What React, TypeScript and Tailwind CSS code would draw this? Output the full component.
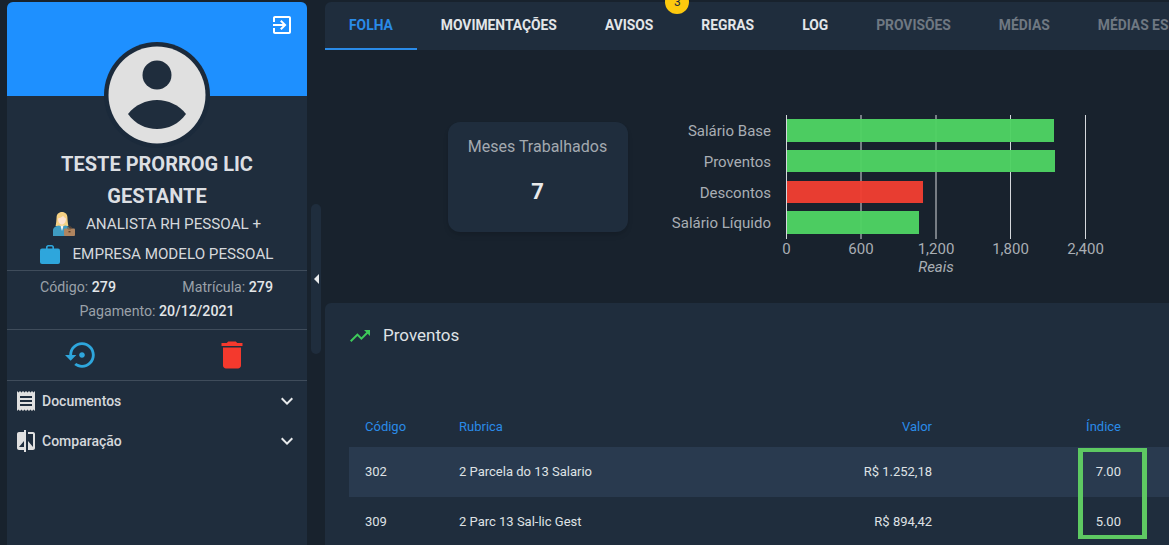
const tabs = [
  { label: "FOLHA", cls: "text-[#2a8be8] border-[#2a8be8]" },
  { label: "MOVIMENTAÇÕES", cls: "text-[#e3e6e9] border-transparent" },
  { label: "AVISOS", cls: "text-[#e3e6e9] border-transparent", badge: 3 },
  { label: "REGRAS", cls: "text-[#e3e6e9] border-transparent" },
  { label: "LOG", cls: "text-[#e3e6e9] border-transparent" },
  { label: "PROVISÕES", cls: "text-[#6f7882] border-transparent" },
  { label: "MÉDIAS", cls: "text-[#6f7882] border-transparent" },
  { label: "MÉDIAS ESPECIAIS", cls: "text-[#6f7882] border-transparent" },
];

const bars = [
  { label: "Salário Base", y: 9, h: 23, w: 267, color: "#4ed263" },
  { label: "Proventos", y: 40, h: 22, w: 268, color: "#4ed263" },
  { label: "Descontos", y: 71, h: 22, w: 136, color: "#f03e32" },
  { label: "Salário Líquido", y: 101, h: 23, w: 132, color: "#4ed263" },
];

const ticks = [
  { label: "0", x: 126.5 },
  { label: "600", x: 201 },
  { label: "1,200", x: 276 },
  { label: "1,800", x: 350.5 },
  { label: "2,400", x: 425.5 },
];

const rows = [
  { codigo: "302", rubrica: "2 Parcela do 13 Salario", valor: "R$ 1.252,18", indice: "7.00", cls: "bg-[#293a4f]" },
  { codigo: "309", rubrica: "2 Parc 13 Sal-lic Gest", valor: "R$ 894,42", indice: "5.00", cls: "" },
];

const Icon = ({ d, className }: { d: string; className: string }) => (
  <svg viewBox="0 0 24 24" fill="currentColor" className={className}>
    <path d={d} />
  </svg>
);

const EXPAND = "M16.59 8.59L12 13.17 7.41 8.59 6 10l6 6 6-6z";

const WomanWorker = () => (
  <svg viewBox="0 0 22 24" className="w-[22px] h-[24px] shrink-0">
    <path d="M3.6 5C3.8 1.4 6.6 0 9 0s5.2 1.4 5.4 5c.2 3.4.4 6.4 1 9H2.6c.6-2.6.8-5.6 1-9z" fill="#f6d184" />
    <path d="M5 6.4c1.8-.2 4-1 5-2.6.7 1.2 1.8 2.2 3 2.7 0 3.4-1.7 6-4 6S5 9.8 5 6.4z" fill="#fde3d2" />
    <path d="M0 24v-5.5c0-3 3-4.6 6-5l3 1.5 3-1.5c2 .3 3.5 1 4.4 2.2V24z" fill="#3f9cc2" />
    <path d="M7.4 13.8h3.2L9 19z" fill="#f5f5f5" />
    <rect x="11" y="16.5" width="11" height="7.5" rx="1" fill="#b08560" />
    <rect x="14.8" y="15" width="3.4" height="2" rx=".5" fill="none" stroke="#7d5436" strokeWidth=".8" />
    <rect x="15.5" y="19" width="2" height="1.4" fill="#5f3f28" />
  </svg>
);

const Briefcase = () => (
  <svg viewBox="0 0 20 19" className="w-[20px] h-[19px] shrink-0">
    <path d="M6 4V2.2C6 1 7 0 8.2 0h3.6C13 0 14 1 14 2.2V4h-1.6V2.4c0-.5-.3-.8-.8-.8H8.4c-.5 0-.8.3-.8.8V4z" fill="#2ea6dc" />
    <rect x="0" y="3.5" width="20" height="15.5" rx="2" fill="#2ea6dc" />
  </svg>
);

const Avatar = () => (
  <svg viewBox="0 0 106 106" className="w-[106px] h-[106px]">
    <circle cx="53" cy="53" r="53" fill="#1b2a3b" />
    <circle cx="53" cy="53" r="48.5" fill="#e0e0e0" />
    <circle cx="53" cy="33" r="14.5" fill="#1f2d3d" />
    <path d="M24 72c7-9 18-14 29-14s22 5 29 14c-7 10-18 15-29 15s-22-5-29-15z" fill="#1f2d3d" />
  </svg>
);

const Sidebar = () => (
  <aside className="w-[300px] shrink-0 h-[543px] mt-[2px] ml-[7px] rounded-t-[6px] bg-[#1f2d3d] overflow-hidden">
    <div className="h-[94px] bg-[#1e90ff] flex justify-end pt-[11px] pr-[13px]">
      <Icon
        className="w-6 h-6 text-white"
        d="M10.09 15.59L11.5 17l5-5-5-5-1.41 1.41L12.67 11H3v2h9.67l-2.58 2.59zM19 3H5c-1.11 0-2 .9-2 2v4h2V5h14v14H5v-4H3v4c0 1.1.89 2 2 2h14c1.1 0 2-.9 2-2V5c0-1.1-.9-2-2-2z"
      />
    </div>
    <div className="flex justify-center -mt-[54px] relative">
      <Avatar />
    </div>
    <h2 className="text-center text-[20px] leading-[32px] font-bold text-[#dcdfe3]">
      TESTE PRORROG LIC
      <br />
      GESTANTE
    </h2>
    <div className="flex items-center justify-center gap-[11px] h-[30px] -mt-[3px] text-[15.2px] text-[#d5d8dc]">
      <WomanWorker />
      <span>ANALISTA RH PESSOAL +</span>
    </div>
    <div className="flex items-center justify-center gap-[12px] h-[30px] text-[15.2px] text-[#d5d8dc]">
      <Briefcase />
      <span>EMPRESA MODELO PESSOAL</span>
    </div>
    <div className="border-t border-[#3f4c5b] mt-[1px] pt-[4px] pb-[6px] text-[14.2px] leading-[24px] text-[#9aa1a9]">
      <div className="flex justify-between pl-[33px] pr-[34px]">
        <span>
          Código: <b className="font-medium text-[#e3e6e9]">279</b>
        </span>
        <span>
          Matrícula: <b className="font-medium text-[#e3e6e9]">279</b>
        </span>
      </div>
      <div className="text-center">
        Pagamento: <b className="font-medium text-[#e3e6e9]">20/12/2021</b>
      </div>
    </div>
    <div className="grid grid-cols-2 place-items-center h-[52px] border-y border-[#3f4c5b]">
      <Icon
        className="w-[34px] h-[34px] text-[#2ea6dc]"
        d="M14 12c0-1.1-.9-2-2-2s-2 .9-2 2 .9 2 2 2 2-.9 2-2zm-2-9c-4.97 0-9 4.03-9 9H0l4 4 4-4H5c0-3.87 3.13-7 7-7s7 3.13 7 7-3.13 7-7 7c-1.51 0-2.91-.49-4.06-1.3l-1.42 1.44C8.04 20.3 9.94 21 12 21c4.97 0 9-4.03 9-9s-4.03-9-9-9z"
      />
      <Icon
        className="w-9 h-9 text-[#f4392d]"
        d="M6 19c0 1.1.9 2 2 2h8c1.1 0 2-.9 2-2V7H6v12zM19 4h-3.5l-1-1h-5l-1 1H5v2h14V4z"
      />
    </div>
    <div className="pl-[7px] pr-[8px] text-[14px] font-medium text-[#d5d8dc]">
      <div className="flex items-center h-[40px]">
        <Icon
          className="w-6 h-6 text-[#e0e0e0]"
          d="M18 17H6v-2h12v2zm0-4H6v-2h12v2zm0-4H6V7h12v2zM3 22l1.5-1.5L6 22l1.5-1.5L9 22l1.5-1.5L12 22l1.5-1.5L15 22l1.5-1.5L18 22l1.5-1.5L21 22V2l-1.5 1.5L18 2l-1.5 1.5L15 2l-1.5 1.5L12 2l-1.5 1.5L9 2 7.5 3.5 6 2 4.5 3.5 3 2v20z"
        />
        <span className="ml-[4px] flex-1">Documentos</span>
        <Icon className="w-6 h-6 text-[#e8eaec]" d={EXPAND} />
      </div>
      <div className="flex items-center h-[40px]">
        <Icon
          className="w-6 h-6 text-[#e0e0e0]"
          d="M10 3H5c-1.1 0-2 .9-2 2v14c0 1.1.9 2 2 2h5v2h2V1h-2v2zm0 15H5l5-6v6zm9-15h-5v2h5v13l-5-6v9h5c1.1 0 2-.9 2-2V5c0-1.1-.9-2-2-2z"
        />
        <span className="ml-[4px] flex-1">Comparação</span>
        <Icon className="w-6 h-6 text-[#e8eaec]" d={EXPAND} />
      </div>
    </div>
  </aside>
);

const Chart = () => (
  <svg width="460" height="170" className="mt-[60px] ml-[32px] shrink-0" style={{ fontFamily: "Roboto, sans-serif" }}>
    {ticks.map((t) => (
      <line key={t.label} x1={t.x} x2={t.x} y1="5" y2="129" stroke="#d5d8dc" strokeWidth="1" />
    ))}
    {bars.map((b) => (
      <g key={b.label}>
        <rect x="127" y={b.y} width={b.w} height={b.h} fill={b.color} fillOpacity="0.97" />
        <text x="111" y={b.y + b.h / 2 + 5.5} textAnchor="end" fontSize="15" fill="#a9aeb4">
          {b.label}
        </text>
      </g>
    ))}
    {ticks.map((t) => (
      <text key={t.label} x={t.x} y="144" textAnchor="middle" fontSize="15" fill="#a9aeb4">
        {t.label}
      </text>
    ))}
    <text x="276" y="162" textAnchor="middle" fontSize="15" fontStyle="italic" fill="#a9aeb4">
      Reais
    </text>
  </svg>
);

export default function App() {
  return (
    <div className="h-[545px] w-[1169px] overflow-hidden flex bg-[#18222d] font-['Roboto',sans-serif]">
      <Sidebar />
      <div className="w-[18px] shrink-0 pt-[204px] pl-[4px]">
        <div className="w-[10px] h-[150px] rounded-[5px] bg-[#1f2d3d] flex items-center justify-center">
          <span className="w-0 h-0 border-y-[5px] border-y-transparent border-r-[5px] border-r-[#e8eaec]" />
        </div>
      </div>
      <main className="flex-1 min-w-0 flex flex-col overflow-hidden">
        <nav className="h-[48px] mt-[2px] shrink-0 flex bg-[#1f2d3d] rounded-tl-[6px] text-[13.85px] font-bold whitespace-nowrap">
          {tabs.map((t) => (
            <div key={t.label} className={`relative px-[24px] h-full flex items-center border-b-2 ${t.cls}`}>
              {t.label}
              {t.badge && (
                <span className="absolute -top-[12px] -right-[12px] w-6 h-6 rounded-full bg-[#fdc90e] text-[#1f2d3d] text-[12px] font-normal flex items-center justify-center">
                  {t.badge}
                </span>
              )}
            </div>
          ))}
        </nav>
        <section className="h-[253px] shrink-0 flex items-start">
          <div className="ml-[123px] mt-[72px] w-[180px] h-[110px] shrink-0 rounded-[12px] bg-[#1f2d3d] shadow-md text-center pt-[15px] pr-[1px]">
            <p className="text-[16px] leading-[20px] text-[#a3a9b0]">Meses Trabalhados</p>
            <p className="mt-[22px] text-[22px] leading-[26px] font-bold text-[#e8eaec]">7</p>
          </div>
          <Chart />
        </section>
        <section className="relative flex-1 bg-[#1f2d3d] rounded-tl-[6px] pl-[24px]">
          <div className="flex items-center h-[64px] pt-[1px] text-[#dfe2e5] text-[17px]">
            <Icon
              className="w-6 h-6 text-[#3ecb5a] -ml-[1px]"
              d="M16 6l2.29 2.29-4.88 4.88-4-4L2 16.59 3.41 18l6-6 4 4 6.3-6.29L22 12V6z"
            />
            <span className="ml-[11px]">Proventos</span>
          </div>
          <div className="grid grid-cols-[110px_1fr_100px_189px_48px] items-center mt-[40px] h-[40px] text-[13px] text-[#2a8be8]">
            <span className="pl-[16px]">Código</span>
            <span>Rubrica</span>
            <span className="text-right">Valor</span>
            <span className="text-right">Índice</span>
            <span />
          </div>
          {rows.map((r) => (
            <div
              key={r.codigo}
              className={`grid grid-cols-[110px_1fr_100px_189px_48px] items-center h-[50px] text-[13px] text-[#dfe2e5] ${r.cls}`}
            >
              <span className="pl-[16px]">{r.codigo}</span>
              <span>{r.rubrica}</span>
              <span className="text-right">{r.valor}</span>
              <span className="text-right">{r.indice}</span>
              <span />
            </div>
          ))}
          <div className="absolute left-[753px] top-[145px] w-[69px] h-[91px] border-y-[4px] border-x-[5px] border-[#5ec962]" />
        </section>
      </main>
    </div>
  );
}
